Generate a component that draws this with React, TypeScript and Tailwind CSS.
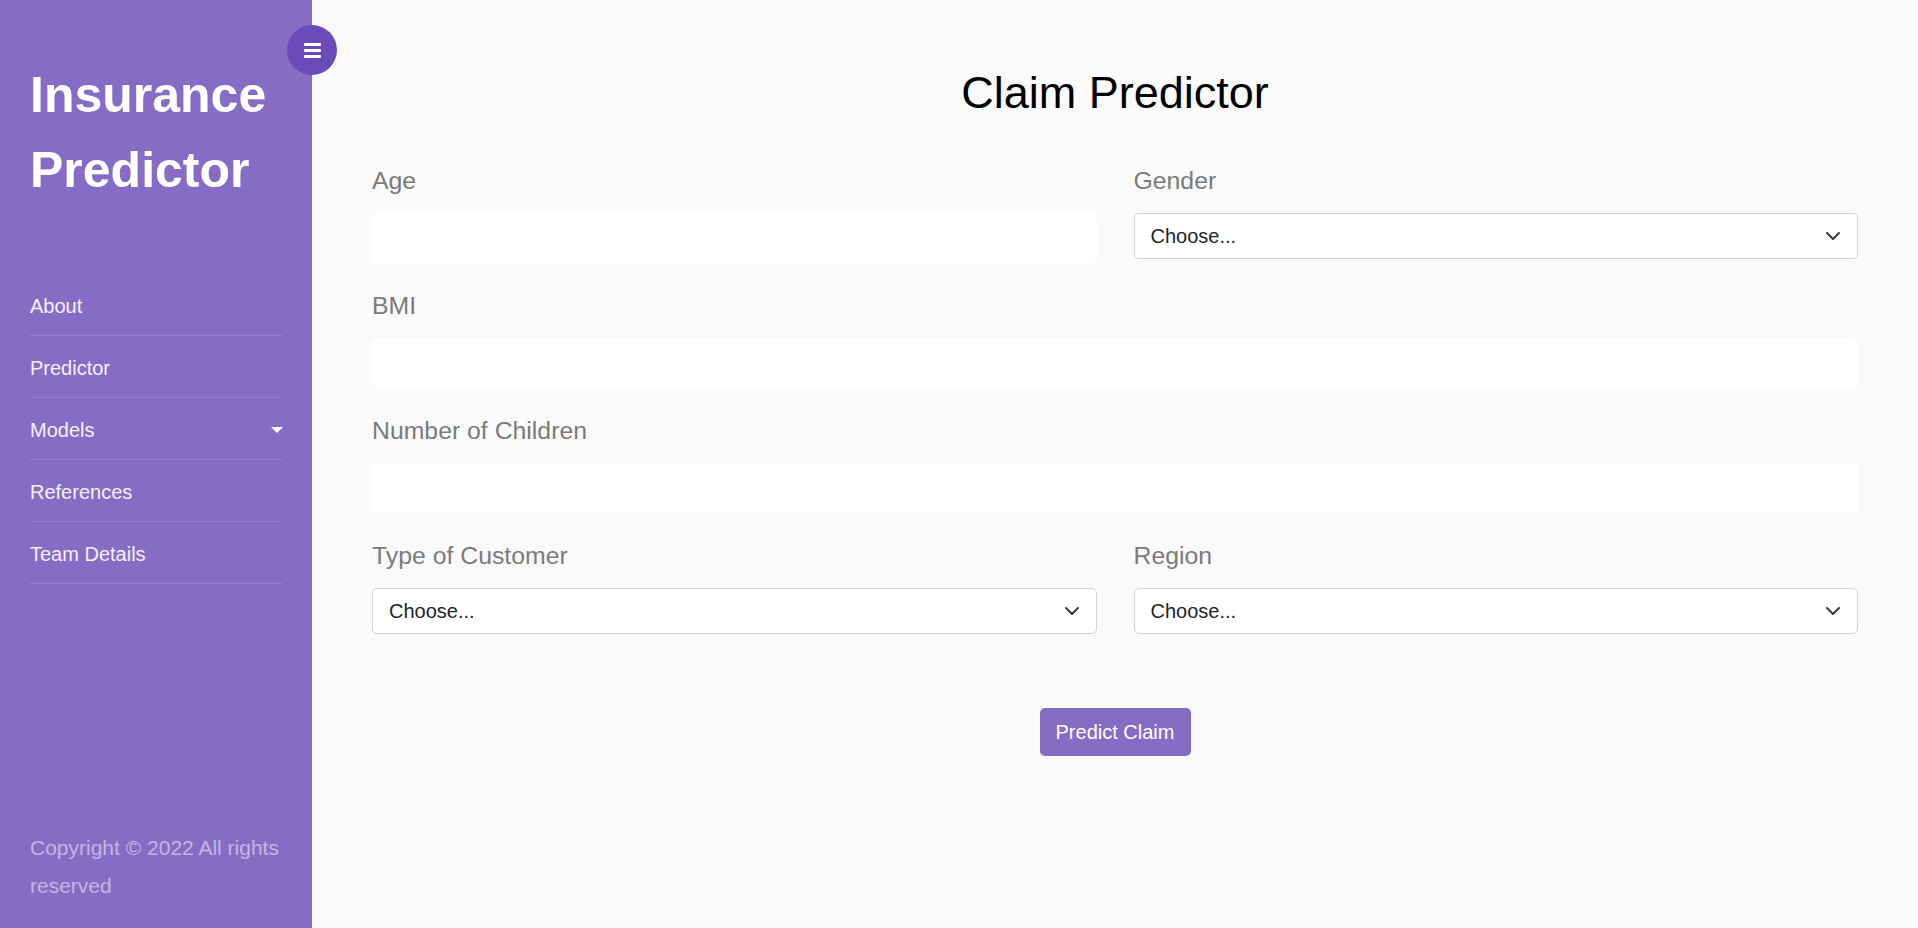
import { useState } from 'react';

const NAV_ITEMS = ['About', 'Predictor', 'Models', 'References', 'Team Details'];

const FONT = { fontFamily: '"Liberation Sans", Arial, sans-serif' };

function Chevron() {
  return (
    <svg
      className="pointer-events-none absolute right-[17px] top-1/2 h-[16px] w-[16px] -translate-y-1/2"
      viewBox="0 0 16 16"
      fill="none"
      stroke="#343a40"
      strokeWidth="2"
      strokeLinecap="round"
      strokeLinejoin="round"
    >
      <path d="M2 5l6 6 6-6" />
    </svg>
  );
}

function Field({ label, children, wide }: { label: string; children: React.ReactNode; wide?: boolean }) {
  return (
    <div className={wide ? 'col-span-2' : ''}>
      <label className="mb-[14px] block text-[24.8px] leading-[36px] text-[#7b7b7b]">{label}</label>
      {children}
    </div>
  );
}

function TextInput() {
  return <input type="text" className="block h-[50px] w-full rounded-[5px] bg-white px-[17px] text-[20px] outline-none" />;
}

function Select({ value, onChange }: { value: string; onChange: (v: string) => void }) {
  return (
    <div className="relative">
      <select
        value={value}
        onChange={(e) => onChange(e.target.value)}
        className="block h-[46px] w-full appearance-none rounded-[5px] border border-[#ced4da] bg-white px-[16px] text-[20px] text-[#212529] outline-none"
      >
        <option value="">Choose...</option>
      </select>
      <Chevron />
    </div>
  );
}

export default function App() {
  const [gender, setGender] = useState('');
  const [customer, setCustomer] = useState('');
  const [region, setRegion] = useState('');

  return (
    <div className="flex h-[928px] w-full" style={FONT}>
      <aside className="relative flex w-[312px] shrink-0 flex-col bg-[#866cc5] px-[30px]">
        <button
          className="absolute right-[-25px] top-[25px] z-10 flex h-[50px] w-[50px] items-center justify-center rounded-full bg-[#6a4bb9]"
          aria-label="Toggle sidebar"
        >
          <svg width="17" height="15" viewBox="0 0 17 15" fill="white">
            <rect x="0" y="0" width="17" height="3" rx="1" />
            <rect x="0" y="6" width="17" height="3" rx="1" />
            <rect x="0" y="12" width="17" height="3" rx="1" />
          </svg>
        </button>

        <h1 className="pt-[58px] text-[50px] font-bold leading-[75px] text-white">
          Insurance Predictor
        </h1>

        <nav className="mt-[66px]">
          {NAV_ITEMS.map((item) => (
            <a
              key={item}
              href="#"
              className="flex items-center justify-between border-b border-white/15 pb-[14px] pt-[17px] text-[20px] leading-[30px] text-white/90"
            >
              {item}
              {item === 'Models' && (
                <span className="mr-[-1px] h-0 w-0 border-x-[6px] border-t-[6px] border-x-transparent border-t-white" />
              )}
            </a>
          ))}
        </nav>

        <p className="mt-auto pb-[23px] text-[21px] leading-[38px] text-white/50">
          Copyright © 2022 All rights reserved
        </p>
      </aside>

      <main className="flex-1 bg-[#fafafa] px-[60px]">
        <h2 className="pt-[67px] text-center text-[45px] leading-[52px] text-black">Claim Predictor</h2>

        <form className="mt-[44px]" onSubmit={(e) => e.preventDefault()}>
          <div className="grid grid-cols-2 gap-x-[37px] gap-y-[25px]">
            <Field label="Age">
              <TextInput />
            </Field>
            <Field label="Gender">
              <Select value={gender} onChange={setGender} />
            </Field>
            <Field label="BMI" wide>
              <TextInput />
            </Field>
            <Field label="Number of Children" wide>
              <TextInput />
            </Field>
            <Field label="Type of Customer">
              <Select value={customer} onChange={setCustomer} />
            </Field>
            <Field label="Region">
              <Select value={region} onChange={setRegion} />
            </Field>
          </div>

          <div className="mt-[74px] flex justify-center">
            <button
              type="submit"
              className="h-[48px] w-[151px] rounded-[5px] bg-[#866cc5] text-[20px] text-white"
            >
              Predict Claim
            </button>
          </div>
        </form>
      </main>
    </div>
  );
}
